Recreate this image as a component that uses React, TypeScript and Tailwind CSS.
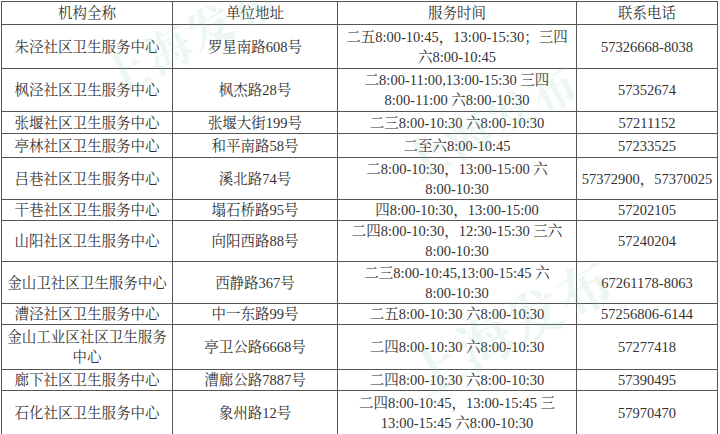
import React from 'react';

type Row = {
    name: React.ReactNode;
    address: string;
    hours: React.ReactNode;
    phone: string;
    h: string;
};

const rows: Row[] = [
    { name: '朱泾社区卫生服务中心', address: '罗星南路608号', hours: <>二五8:00-10:45，13:00-15:30；三四<br />六8:00-10:45</>, phone: '57326668-8038', h: 'h-[44px]' },
    { name: '枫泾社区卫生服务中心', address: '枫杰路28号', hours: <>二8:00-11:00,13:00-15:30 三四<br />8:00-11:00 六8:00-10:30</>, phone: '57352674', h: 'h-[43px]' },
    { name: '张堰社区卫生服务中心', address: '张堰大街199号', hours: '二三8:00-10:30 六8:00-10:30', phone: '57211152', h: 'h-[22px]' },
    { name: '亭林社区卫生服务中心', address: '和平南路58号', hours: '二至六8:00-10:45', phone: '57233525', h: 'h-[24px]' },
    { name: '吕巷社区卫生服务中心', address: '溪北路74号', hours: <>二8:00-10:30，13:00-15:00 六<br />8:00-10:30</>, phone: '57372900，57370025', h: 'h-[42px]' },
    { name: '干巷社区卫生服务中心', address: '塌石桥路95号', hours: '四8:00-10:30，13:00-15:00', phone: '57202105', h: 'h-[21px]' },
    { name: '山阳社区卫生服务中心', address: '向阳西路88号', hours: <>二四8:00-10:30，12:30-15:30 三六<br />8:00-10:30</>, phone: '57240204', h: 'h-[40px]' },
    { name: '金山卫社区卫生服务中心', address: '西静路367号', hours: <>二三8:00-10:45,13:00-15:45 六<br />8:00-10:30</>, phone: '67261178-8063', h: 'h-[42px]' },
    { name: '漕泾社区卫生服务中心', address: '中一东路99号', hours: '二五8:00-10:30 六8:00-10:30', phone: '57256806-6144', h: 'h-[21px]' },
    { name: <>金山工业区社区卫生服务<br />中心</>, address: '亭卫公路6668号', hours: '二四8:00-10:30 六8:00-10:30', phone: '57277418', h: 'h-[45px]' },
    { name: '廊下社区卫生服务中心', address: '漕廊公路7887号', hours: '二四8:00-10:30 六8:00-10:30', phone: '57390495', h: 'h-[20px]' },
    { name: '石化社区卫生服务中心', address: '象州路12号', hours: <>二四8:00-10:45，13:00-15:45 三<br />13:00-15:45 六8:00-10:30</>, phone: '57970470', h: 'h-[44px]' },
];

const cell = 'border border-[#555] p-0 text-center align-middle whitespace-nowrap';
const head = 'border border-[#555] p-0 text-center align-middle font-normal whitespace-nowrap';
const mark = 'pointer-events-none absolute -rotate-[28deg] font-bold text-[#7cc9a3] opacity-[0.14] tracking-[2px]';

export default function App() {
    return (
        <div
            className="relative w-[720px] h-[434px] overflow-hidden bg-white text-[#333] text-[14.5px] leading-[20px]"
            style={{ fontFamily: '"Liberation Serif", "Noto Serif CJK SC", "Noto Sans CJK SC", serif' }}
        >
            <div className="pl-[1px] pt-[1px]">
                <table className="border-collapse table-fixed w-[717px]">
                    <colgroup>
                        <col className="w-[171px]" />
                        <col className="w-[165px]" />
                        <col className="w-[239px]" />
                        <col className="w-[141px]" />
                    </colgroup>
                    <thead>
                        <tr className="h-[23px]">
                            <th className={head}>机构全称</th>
                            <th className={head}>单位地址</th>
                            <th className={head}>服务时间</th>
                            <th className={head}>联系电话</th>
                        </tr>
                    </thead>
                    <tbody>
                        {rows.map((r, i) => (
                            <tr key={i} className={r.h}>
                                <td className={cell}>{r.name}</td>
                                <td className={cell}>{r.address}</td>
                                <td className={cell}>{r.hours}</td>
                                <td className={cell}>{r.phone}</td>
                            </tr>
                        ))}
                    </tbody>
                </table>
            </div>

            {/* watermark */}
            <div className={`${mark} left-[95px] top-[30px] text-[46px]`}>上海发布</div>
            <div className={`${mark} left-[395px] top-[115px] text-[46px]`}>上海发布</div>
            <div className={`${mark} left-[400px] top-[320px] text-[54px]`}>上海发布</div>
        </div>
    );
}
